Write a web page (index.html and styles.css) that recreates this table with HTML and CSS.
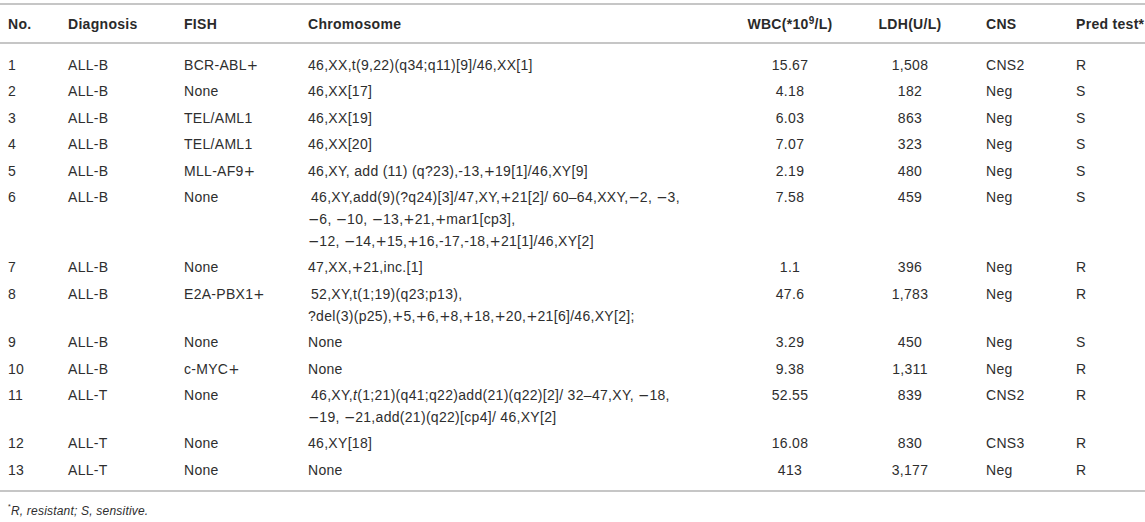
FILE: index.html
```html
<!DOCTYPE html>
<html>
<head>
<meta charset="utf-8">
<link rel="stylesheet" href="styles.css">
</head>
<body>
<table class="data">
<colgroup>
<col class="c-no"><col class="c-diag"><col class="c-fish"><col class="c-chr"><col class="c-wbc"><col class="c-ldh"><col class="c-cns"><col class="c-pred">
</colgroup>
<thead>
<tr>
<th>No.</th><th>Diagnosis</th><th>FISH</th><th>Chromosome</th><th class="ctr">WBC(*10<sup>9</sup>/L)</th><th class="ctr ldh">LDH(U/L)</th><th>CNS</th><th>Pred test*</th>
</tr>
</thead>
<tbody>
<tr><td>1</td><td>ALL-B</td><td>BCR-ABL<span class="op">+</span></td><td>46,XX,t(9,22)(q34;q11)[9]/46,XX[1]</td><td class="ctr">15.67</td><td class="ctr ldh">1,508</td><td>CNS2</td><td>R</td></tr>
<tr><td>2</td><td>ALL-B</td><td>None</td><td>46,XX[17]</td><td class="ctr">4.18</td><td class="ctr ldh">182</td><td>Neg</td><td>S</td></tr>
<tr><td>3</td><td>ALL-B</td><td>TEL/AML1</td><td>46,XX[19]</td><td class="ctr">6.03</td><td class="ctr ldh">863</td><td>Neg</td><td>S</td></tr>
<tr><td>4</td><td>ALL-B</td><td>TEL/AML1</td><td>46,XX[20]</td><td class="ctr">7.07</td><td class="ctr ldh">323</td><td>Neg</td><td>S</td></tr>
<tr><td>5</td><td>ALL-B</td><td>MLL-AF9<span class="op">+</span></td><td>46,XY, add (11) (q?23),-13,<span class="op">+</span>19[1]/46,XY[9]</td><td class="ctr">2.19</td><td class="ctr ldh">480</td><td>Neg</td><td>S</td></tr>
<tr><td>6</td><td>ALL-B</td><td>None</td><td><span class="lead">46,XY,add(9)(?q24)[3]/47,XY,<span class="op">+</span>21[2]/ 60–64,XXY,<span class="op">−</span>2, <span class="op">−</span>3,</span><br><span class="op">−</span>6, <span class="op">−</span>10, <span class="op">−</span>13,<span class="op">+</span>21,<span class="op">+</span>mar1[cp3],<br><span class="op">−</span>12, <span class="op">−</span>14,<span class="op">+</span>15,<span class="op">+</span>16,-17,-18,<span class="op">+</span>21[1]/46,XY[2]</td><td class="ctr">7.58</td><td class="ctr ldh">459</td><td>Neg</td><td>S</td></tr>
<tr><td>7</td><td>ALL-B</td><td>None</td><td>47,XX,<span class="op">+</span>21,inc.[1]</td><td class="ctr">1.1</td><td class="ctr ldh">396</td><td>Neg</td><td>R</td></tr>
<tr><td>8</td><td>ALL-B</td><td>E2A-PBX1<span class="op">+</span></td><td><span class="lead">52,XY,t(1;19)(q23;p13),</span><br>?del(3)(p25),<span class="op">+</span>5,<span class="op">+</span>6,<span class="op">+</span>8,<span class="op">+</span>18,<span class="op">+</span>20,<span class="op">+</span>21[6]/46,XY[2];</td><td class="ctr">47.6</td><td class="ctr ldh">1,783</td><td>Neg</td><td>R</td></tr>
<tr><td>9</td><td>ALL-B</td><td>None</td><td>None</td><td class="ctr">3.29</td><td class="ctr ldh">450</td><td>Neg</td><td>S</td></tr>
<tr><td>10</td><td>ALL-B</td><td>c-MYC<span class="op">+</span></td><td>None</td><td class="ctr">9.38</td><td class="ctr ldh">1,311</td><td>Neg</td><td>R</td></tr>
<tr><td>11</td><td>ALL-T</td><td>None</td><td><span class="lead">46,XY,<i>t</i>(1;21)(q41;q22)add(21)(q22)[2]/ 32–47,XY, <span class="op">−</span>18,</span><br><span class="op">−</span>19, <span class="op">−</span>21,add(21)(q22)[cp4]/ 46,XY[2]</td><td class="ctr">52.55</td><td class="ctr ldh">839</td><td>CNS2</td><td>R</td></tr>
<tr><td>12</td><td>ALL-T</td><td>None</td><td>46,XY[18]</td><td class="ctr">16.08</td><td class="ctr ldh">830</td><td>CNS3</td><td>R</td></tr>
<tr><td>13</td><td>ALL-T</td><td>None</td><td>None</td><td class="ctr">413</td><td class="ctr ldh">3,177</td><td>Neg</td><td>R</td></tr>
</tbody>
</table>
<p class="note"><sup class="star">*</sup><i>R, resistant; S, sensitive.</i></p>
</body>
</html>
```

FILE: styles.css
```css
html, body {
  margin: 0;
  padding: 0;
  background: #ffffff;
}
body {
  padding-top: 3px;
  font-family: "Liberation Sans", Arial, sans-serif;
  font-size: 14px;
  letter-spacing: 0.3px;
  color: #2e2e2e;
}
.data {
  width: 1145px;
  table-layout: fixed;
  border-collapse: collapse;
  border-top: 2px solid #c6c6c6;
  border-bottom: 2px solid #c6c6c6;
}
.c-no { width: 60px; }
.c-diag { width: 116px; }
.c-fish { width: 124px; }
.c-chr { width: 430px; }
.c-wbc { width: 120px; }
.c-ldh { width: 128px; }
.c-cns { width: 90px; }
.c-pred { width: 77px; }
.data th {
  font-weight: bold;
  text-align: left;
  padding: 10px 0 9px 8px;
  line-height: 18px;
  border-bottom: 2px solid #c6c6c6;
  white-space: nowrap;
  color: #2a2a2a;
}
.data th sup {
  font-size: 10px;
  line-height: 0;
  vertical-align: 5px;
}
.data td {
  padding: 2px 0 2.4px 8px;
  line-height: 22px;
  vertical-align: top;
  white-space: nowrap;
}
.data tbody tr:first-child td { padding-top: 10px; }
.data tbody tr:last-child td { padding-bottom: 9px; }
.data .ctr {
  text-align: center;
  padding-left: 0;
}
.data .ldh {
  padding-right: 8px;
}
.op {
  font-family: "DejaVu Sans", sans-serif;
  font-size: 13.5px;
  letter-spacing: 0;
}
.lead {
  padding-left: 3px;
}
.note {
  margin: 11px 0 0 0;
  padding-left: 8px;
  font-size: 12px;
  letter-spacing: 0.2px;
  line-height: 16px;
  color: #2e2e2e;
}
.star {
  font-size: 7px;
  vertical-align: 6px;
  line-height: 0;
}
```
